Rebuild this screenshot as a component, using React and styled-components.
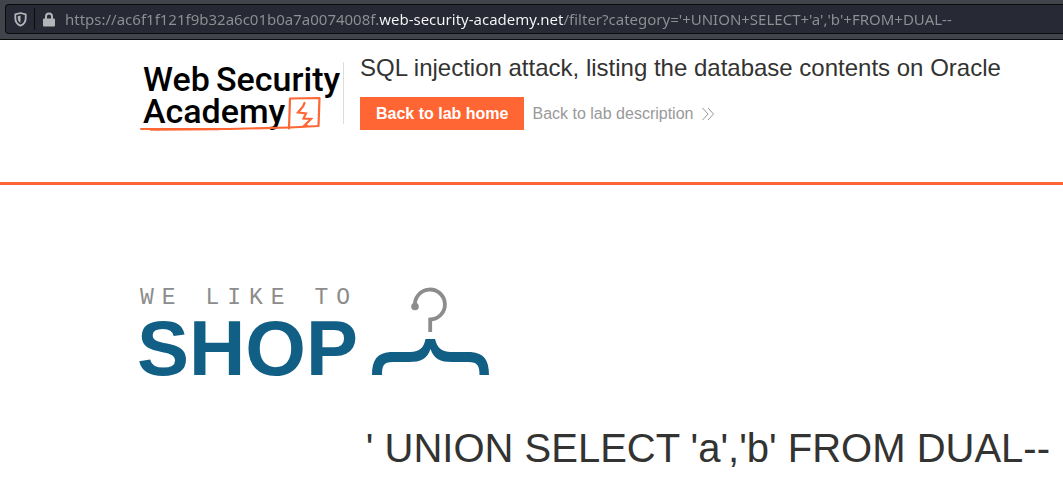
import React from "react";
import styled, { createGlobalStyle } from "styled-components";

const GlobalStyle = createGlobalStyle`
  *, *::before, *::after { box-sizing: border-box; }
  body {
    margin: 0;
    background: #fff;
    color: #333332;
    font-family: "Liberation Sans", Arial, sans-serif;
    font-size: 16px;
    overflow-x: hidden;
  }
`;

const BrowserBar = styled.div`
  height: 40px;
  padding: 4px 0 5px 5px;
  background: #42444c;
  border-bottom: 1px solid #0c0c0d;
`;

const AddressField = styled.label`
  display: flex;
  align-items: center;
  height: 30px;
  padding-left: 8px;
  background: #272935;
  border: 1px solid #0c0c0d;
  border-right: 0;
  border-radius: 4px 0 0 4px;
`;

const FieldDivider = styled.span`
  width: 1px;
  height: 22px;
  margin: 0 8px 0 7px;
  background: #0c0c0d;
`;

const AddressInput = styled.input`
  flex: 1;
  min-width: 0;
  height: 28px;
  margin-left: 10px;
  padding: 0;
  border: 0;
  outline: 0;
  font-family: "Noto Sans", sans-serif;
  font-size: 15px;
  color: transparent;
  caret-color: #fff;
  background: linear-gradient(
    90deg,
    #8f9094 314px,
    #f9f9fa 314px,
    #f9f9fa 499px,
    #8f9094 499px
  );
  background-clip: text;
  -webkit-background-clip: text;
`;

const Header = styled.header`
  display: flex;
  min-height: 145px;
  padding: 14px 16px 0 139px;
  border-bottom: 3px solid #ff6633;
`;

const LogoLink = styled.a`
  flex: none;
  display: block;
  width: 204px;
  height: 84px;
`;

const HeaderText = styled.div`
  flex: 1;
  min-width: 0;
`;

const LogoDivider = styled.div`
  flex: none;
  width: 1px;
  height: 62px;
  margin: 8px 16px 0 0;
  background: #dcdcdc;
`;

const LabTitle = styled.h2`
  margin: 0 0 15px;
  font-size: 24px;
  font-weight: 400;
  line-height: 28px;
`;

const Actions = styled.div`
  display: flex;
  align-items: center;
  gap: 8px;
`;

const HomeButton = styled.button`
  height: 33px;
  padding: 0 16px;
  border: 0;
  background: #ff6633;
  color: #fff;
  font-family: inherit;
  font-size: 16px;
  font-weight: 700;
  cursor: pointer;
`;

const DescriptionLink = styled.a`
  display: flex;
  align-items: center;
  gap: 8px;
  color: #999;
  text-decoration: none;
`;

const Main = styled.main`
  padding: 95px 13px 16px 137px;
`;

const ShopLogo = styled.svg`
  display: block;
  width: 360px;
  height: 105px;
  overflow: visible;
`;

const CategoryTitle = styled.h1`
  margin: 40px 0 0;
  font-size: 40px;
  font-weight: 400;
  line-height: 46px;
  text-align: right;
`;

const ShieldIcon = () => (
  <svg width="13" height="15" viewBox="0 0 13 15" aria-hidden="true">
    <path d="M6.5 1 L11.7 2.3 V6 C11.7 9.8 9.6 12.6 6.5 13.7 C3.4 12.6 1.3 9.8 1.3 6 V2.3 Z" fill="none" stroke="#b4b5b8" strokeWidth="1.8" strokeLinejoin="round" />
    <path d="M6.5 3.6 V11 C4.7 10 3.8 8.2 3.8 6 V4.2 Z" fill="#b4b5b8" />
  </svg>
);

const LockIcon = () => (
  <svg width="12" height="15" viewBox="0 0 12 15" aria-hidden="true">
    <path d="M3 7 V4.5 A3 3 0 0 1 9 4.5 V7" fill="none" stroke="#b4b5b8" strokeWidth="2" />
    <rect x="0" y="6.5" width="12" height="8" rx="1" fill="#b4b5b8" />
  </svg>
);

const AcademyLogo = () => (
  <svg width="204" height="84" viewBox="0 0 204 84" role="img" aria-label="Web Security Academy">
    <g fill="#000" fontFamily="Roboto, sans-serif" fontSize="34" fontWeight="500">
      <text x="4" y="37">Web</text>
      <text x="77" y="37">Security</text>
      <text x="4" y="69">Academy</text>
    </g>
    <g fill="none" stroke="#ff6633" strokeLinejoin="round" strokeLinecap="round">
      <path d="M150 74.5 L151 44.5 L180.5 44 L179.5 72 L151 73.5" strokeWidth="2.2" />
      <path d="M2 75 L30 75 L90 75 L150 73.5" strokeWidth="2" />
      <path d="M12 75.8 L80 75.2" strokeWidth="2" />
      <path d="M165.5 49 L164 52.5 L159 58.5 L167 59.5 L164.5 64.5 L172 65 L165.5 71.5 L168 71.8" strokeWidth="2.2" strokeLinejoin="miter" />
    </g>
  </svg>
);

export default function App() {
  return (
    <>
      <GlobalStyle />
      <BrowserBar>
        <AddressField>
          <ShieldIcon />
          <FieldDivider />
          <LockIcon />
          <AddressInput
            type="text"
            aria-label="Address"
            spellCheck={false}
            defaultValue="https://ac6f1f121f9b32a6c01b0a7a0074008f.web-security-academy.net/filter?category='+UNION+SELECT+'a','b'+FROM+DUAL--"
          />
        </AddressField>
      </BrowserBar>
      <Header>
        <LogoLink href="#academy">
          <AcademyLogo />
        </LogoLink>
        <LogoDivider />
        <HeaderText>
          <LabTitle>SQL injection attack, listing the database contents on Oracle</LabTitle>
          <Actions>
            <HomeButton type="button">Back to lab home</HomeButton>
            <DescriptionLink href="#description">
              Back to lab description
              <svg width="14" height="14" viewBox="0 0 14 14" fill="none" stroke="#999" aria-hidden="true">
                <path d="M1.5 1 L7 7 L1.5 13 M7 1 L12.5 7 L7 13" />
              </svg>
            </DescriptionLink>
          </Actions>
        </HeaderText>
      </Header>
      <Main>
        <ShopLogo viewBox="0 0 360 105" role="img" aria-label="We like to shop">
          <text x="3" y="24" fill="#8c8c8c" fontFamily="'Liberation Mono', monospace" fontSize="23" letterSpacing="8">WE LIKE TO</text>
          <text x="0" y="95" fill="#125f85" fontFamily="'Liberation Sans', Arial, sans-serif" fontSize="78" fontWeight="700">SHOP</text>
          <circle cx="278" cy="26.5" r="3.8" fill="#8c8c8c" />
          <path d="M278 26 A15 15 0 1 1 293.2 39.5 V52" fill="none" stroke="#8c8c8c" strokeWidth="3.8" />
          <path d="M288.5 59 H298 C300 67 304 72 314 72 H334 C347 73 352 80 352 95 H342.5 C342.5 86 341 82 331 82 H315 C303 82 297 79 293.5 69 C290 79 284 82 272 82 H256 C246 82 245 86 245 95 H235 C235 80 240 73 253 72 H273 C283 72 287 67 288.5 59 Z" fill="#125f85" />
        </ShopLogo>
        <CategoryTitle>' UNION SELECT 'a','b' FROM DUAL--</CategoryTitle>
      </Main>
    </>
  );
}
